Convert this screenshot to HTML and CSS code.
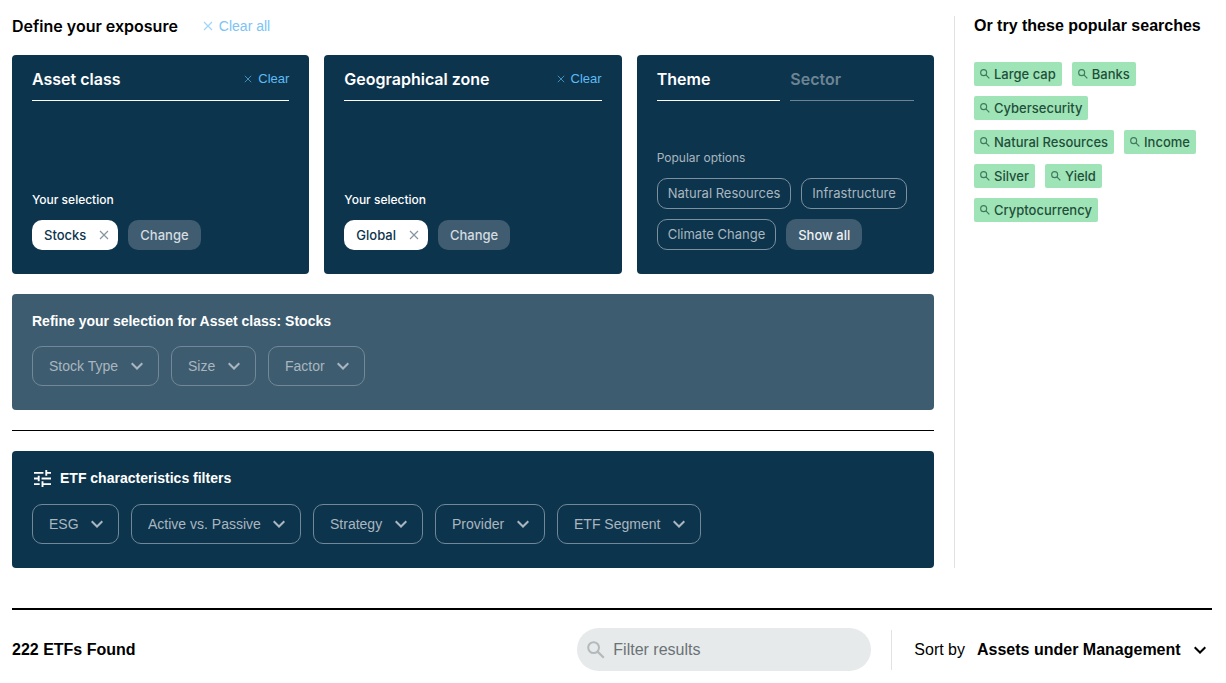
FILE: index.html
```html
<!doctype html>
<html lang="en">
<head>
<meta charset="UTF-8">
<meta name="viewport" content="width=device-width, initial-scale=1">
<title>ETF Screener</title>
<link rel="stylesheet" href="styles.css">
</head>

<body>
    <!-- shared icons -->
    <svg class="sprite" aria-hidden="true">
        <symbol id="cross" viewBox="0 0 10 10"><path d="M1 1l8 8M9 1l-8 8" fill="none" stroke="currentColor" stroke-width="1.2"/></symbol>
        <symbol id="chevron" viewBox="0 0 12 8"><path d="M.7 1.2L6 6.5l5.3-5.3" fill="none" stroke="currentColor" stroke-width="2"/></symbol>
        <symbol id="search" viewBox="0 0 18 18"><circle cx="6.6" cy="6.6" r="5.4" fill="none" stroke="currentColor" stroke-width="2"/><path d="M10.6 10.6l6.2 6.2" fill="none" stroke="currentColor" stroke-width="2.2"/></symbol>
        <symbol id="tune" viewBox="3 3 18 18"><path fill="currentColor" d="M3 17v2h6v-2H3zM3 5v2h10V5H3zm10 16v-2h8v-2h-8v-2h-2v6h2zM7 9v2H3v2h4v2h2V9H7zm14 4v-2H11v2h10zm-6-4h2V7h4V5h-4V3h-2v6z"/></symbol>
    </svg>

    <main>
        <div class="top">
            <div class="filters">
                <div class="title-row">
                    <h2>Define your exposure</h2>
                    <button type="button" class="clear clear-all"><svg><use href="#cross"/></svg>Clear all</button>
                </div>

                <div class="cards">
                    <section class="card">
                        <div class="card-head">
                            <h3>Asset class</h3>
                            <button type="button" class="clear"><svg><use href="#cross"/></svg>Clear</button>
                        </div>
                        <p>Your selection</p>
                        <div class="chips">
                            <button type="button" class="chip selected">Stocks<svg><use href="#cross"/></svg></button>
                            <button type="button" class="chip solid">Change</button>
                        </div>
                    </section>

                    <section class="card">
                        <div class="card-head">
                            <h3>Geographical zone</h3>
                            <button type="button" class="clear"><svg><use href="#cross"/></svg>Clear</button>
                        </div>
                        <p>Your selection</p>
                        <div class="chips">
                            <button type="button" class="chip selected">Global<svg><use href="#cross"/></svg></button>
                            <button type="button" class="chip solid">Change</button>
                        </div>
                    </section>

                    <section class="card">
                        <div class="tabs">
                            <button type="button" class="tab active">Theme</button>
                            <button type="button" class="tab">Sector</button>
                        </div>
                        <p class="muted">Popular options</p>
                        <div class="chips">
                            <button type="button" class="chip">Natural Resources</button>
                            <button type="button" class="chip">Infrastructure</button>
                            <button type="button" class="chip">Climate Change</button>
                            <button type="button" class="chip solid bright">Show all</button>
                        </div>
                    </section>
                </div>

                <section class="panel refine">
                    <h4>Refine your selection for Asset class: Stocks</h4>
                    <div class="dropdowns">
                        <div class="dropdown"><select aria-label="Stock Type"><option>Stock Type</option></select><svg><use href="#chevron"/></svg></div>
                        <div class="dropdown"><select aria-label="Size"><option>Size</option></select><svg><use href="#chevron"/></svg></div>
                        <div class="dropdown"><select aria-label="Factor"><option>Factor</option></select><svg><use href="#chevron"/></svg></div>
                    </div>
                </section>

                <hr>

                <section class="panel">
                    <h4><svg><use href="#tune"/></svg>ETF characteristics filters</h4>
                    <div class="dropdowns">
                        <div class="dropdown"><select aria-label="ESG"><option>ESG</option></select><svg><use href="#chevron"/></svg></div>
                        <div class="dropdown"><select aria-label="Active vs. Passive"><option>Active vs. Passive</option></select><svg><use href="#chevron"/></svg></div>
                        <div class="dropdown"><select aria-label="Strategy"><option>Strategy</option></select><svg><use href="#chevron"/></svg></div>
                        <div class="dropdown"><select aria-label="Provider"><option>Provider</option></select><svg><use href="#chevron"/></svg></div>
                        <div class="dropdown"><select aria-label="ETF Segment"><option>ETF Segment</option></select><svg><use href="#chevron"/></svg></div>
                    </div>
                </section>
            </div>

            <aside>
                <h2>Or try these popular searches</h2>
                <div class="tags">
                    <a href="#"><svg><use href="#search"/></svg>Large cap</a>
                    <a href="#"><svg><use href="#search"/></svg>Banks</a>
                    <a href="#"><svg><use href="#search"/></svg>Cybersecurity</a>
                    <a href="#"><svg><use href="#search"/></svg>Natural Resources</a>
                    <a href="#"><svg><use href="#search"/></svg>Income</a>
                    <a href="#"><svg><use href="#search"/></svg>Silver</a>
                    <a href="#"><svg><use href="#search"/></svg>Yield</a>
                    <a href="#"><svg><use href="#search"/></svg>Cryptocurrency</a>
                </div>
            </aside>
        </div>

        <div class="results">
            <h2>222 ETFs Found</h2>
            <div class="search">
                <svg><use href="#search"/></svg>
                <input type="text" placeholder="Filter results" aria-label="Filter results">
            </div>
            <div class="sort">
                <label for="sort">Sort by</label>
                <div class="dropdown plain"><select id="sort"><option>Assets under Management</option></select><svg><use href="#chevron"/></svg></div>
            </div>
        </div>
    </main>
</body>
</html>
```

FILE: styles.css
```css
* {
    box-sizing: border-box;
}

body {
    margin: 0;
    background-color: #fff;
    color: #000;
    font-family: Inter, "Liberation Sans", sans-serif;
    font-size: 14px;
}

h2, h3, h4, p {
    margin: 0;
}

h2, h3 {
    font-size: 16px;
    font-weight: 600;
    line-height: 20px;
}

aside h2, .results h2 {
    font-family: "Liberation Sans", Arial, sans-serif;
    font-weight: 700;
}

h4 {
    display: flex;
    align-items: center;
    gap: 9px;
    font-family: "Liberation Sans", Arial, sans-serif;
    font-size: 14px;
    font-weight: 700;
    line-height: 20px;
}

h4 svg {
    width: 17px;
    height: 17px;
    margin-left: 2px;
}

button, select, input {
    font: inherit;
    color: inherit;
}

button {
    padding: 0;
    border: 0;
    background: none;
    cursor: pointer;
}

svg {
    flex: none;
}

.sprite {
    display: none;
}

main {
    padding: 16px 14px 0 12px;
}

.top {
    display: grid;
    grid-template-columns: minmax(0, 1fr) 258px;
    gap: 20px;
}

.title-row {
    display: flex;
    align-items: center;
    gap: 25px;
    height: 20px;
    margin-bottom: 19px;
}

.clear {
    display: flex;
    align-items: center;
    gap: 6px;
    color: #5ebcf4;
    font-family: "Liberation Sans", Arial, sans-serif;
    font-size: 13px;
    line-height: 20px;
}

.clear svg {
    width: 8px;
    height: 8px;
    opacity: 0.7;
}

.clear-all {
    color: #7cc4f5;
    font-size: 14px;
}

.clear-all svg {
    width: 10px;
    height: 10px;
}

/* exposure cards */
.cards {
    display: grid;
    grid-template-columns: repeat(3, minmax(0, 1fr));
    gap: 15px;
    margin-bottom: 20px;
}

.card {
    display: flex;
    flex-direction: column;
    min-height: 219px;
    padding: 14px 20px 24px;
    border-radius: 4px;
    background-color: #0d344d;
    color: #fff;
}

.card-head {
    display: flex;
    justify-content: space-between;
    align-items: center;
    height: 32px;
    padding-bottom: 11px;
    border-bottom: 1px solid #fff;
}

.tabs {
    display: grid;
    grid-template-columns: 1fr 1fr;
    gap: 10px;
}

.tab {
    height: 32px;
    padding-bottom: 11px;
    border-bottom: 1px solid #6d8494;
    color: #6d8494;
    font-size: 16px;
    font-weight: 600;
    line-height: 20px;
    text-align: left;
}

.tab.active {
    border-color: #fff;
    color: #fff;
}

.card p {
    margin-top: auto;
    margin-bottom: 10px;
    font-size: 12px;
    font-weight: 500;
    line-height: 20px;
}

.card .muted {
    color: #aab6bf;
    font-weight: 400;
}

.chips {
    display: flex;
    flex-wrap: wrap;
    gap: 10px;
}

.chip {
    display: flex;
    align-items: center;
    height: 31px;
    padding: 0 10px 2px;
    border: 1px solid #7c909e;
    border-radius: 10px;
    color: #aab6bf;
    font-size: 13px;
}

.chip.solid, .chip.selected {
    height: 30px;
    padding: 0 12px;
    border: 0;
    background-color: #3f5c70;
    color: #d5dce1;
    font-weight: 500;
}

.chip.selected {
    gap: 13px;
    padding-right: 9px;
    background-color: #fff;
    color: #0d344d;
}

.chip.selected svg {
    width: 10px;
    height: 10px;
    color: #8496a2;
}

.chip.bright {
    height: 31px;
    color: #eef1f3;
}

/* filter panels */
.panel {
    padding: 17px 20px 24px;
    border-radius: 4px;
    background-color: #0d344d;
    color: #fff;
}

.refine {
    background-color: #3d5c70;
}

.dropdowns {
    display: flex;
    flex-wrap: wrap;
    gap: 12px;
    margin-top: 16px;
}

.refine .dropdowns {
    margin-top: 15px;
}

hr {
    margin: 20px 0;
    border: 0;
    border-top: 1px solid #000;
}

.dropdown {
    display: grid;
    align-items: center;
}

.dropdown select {
    grid-area: 1 / 1;
    appearance: none;
    height: 40px;
    padding: 0 39px 0 16px;
    border: 1px solid #728898;
    border-radius: 10px;
    background: none;
    color: #aab6bf;
    font-family: "Liberation Sans", Arial, sans-serif;
    cursor: pointer;
}

.dropdown svg {
    grid-area: 1 / 1;
    justify-self: end;
    width: 12px;
    height: 8px;
    margin-right: 16px;
    color: #aab6bf;
    pointer-events: none;
}

/* popular searches */
aside {
    padding-left: 19px;
    border-left: 1px solid #e2e2e2;
}

.tags {
    display: flex;
    flex-wrap: wrap;
    gap: 10px;
    margin-top: 26px;
}

.tags a {
    display: flex;
    align-items: center;
    gap: 4px;
    height: 24px;
    padding: 0 6px;
    border-radius: 2px;
    background-color: #9fe4b7;
    color: #1f4f3a;
    font-size: 13px;
    font-weight: 500;
    text-decoration: none;
}

.tags svg {
    width: 10px;
    height: 10px;
    color: #3f7a5c;
}

/* results bar */
.results {
    display: flex;
    align-items: center;
    margin-top: 40px;
    padding-top: 18px;
    border-top: 2px solid #000;
    font-size: 16px;
}

.search {
    display: flex;
    align-items: center;
    gap: 8px;
    width: 294px;
    height: 43px;
    margin-left: auto;
    padding: 0 10px;
    border-radius: 22px;
    background-color: #e6eaeb;
}

.search svg {
    width: 18px;
    height: 18px;
    color: #b4babc;
}

.search input {
    flex: 1;
    min-width: 0;
    padding: 0;
    border: 0;
    outline: 0;
    background: none;
    font-family: "Liberation Sans", Arial, sans-serif;
}

.search input::placeholder {
    color: #6b7275;
}

.sort {
    display: flex;
    align-items: center;
    gap: 12px;
    height: 40px;
    margin-left: 20px;
    padding-left: 22px;
    border-left: 1px solid #e2e2e2;
    font-family: "Liberation Sans", Arial, sans-serif;
}

.plain select {
    padding: 0 31px 0 0;
    border: 0;
    color: #000;
    font-weight: 700;
}

.plain svg {
    margin-right: 6px;
    color: #000;
}
```
